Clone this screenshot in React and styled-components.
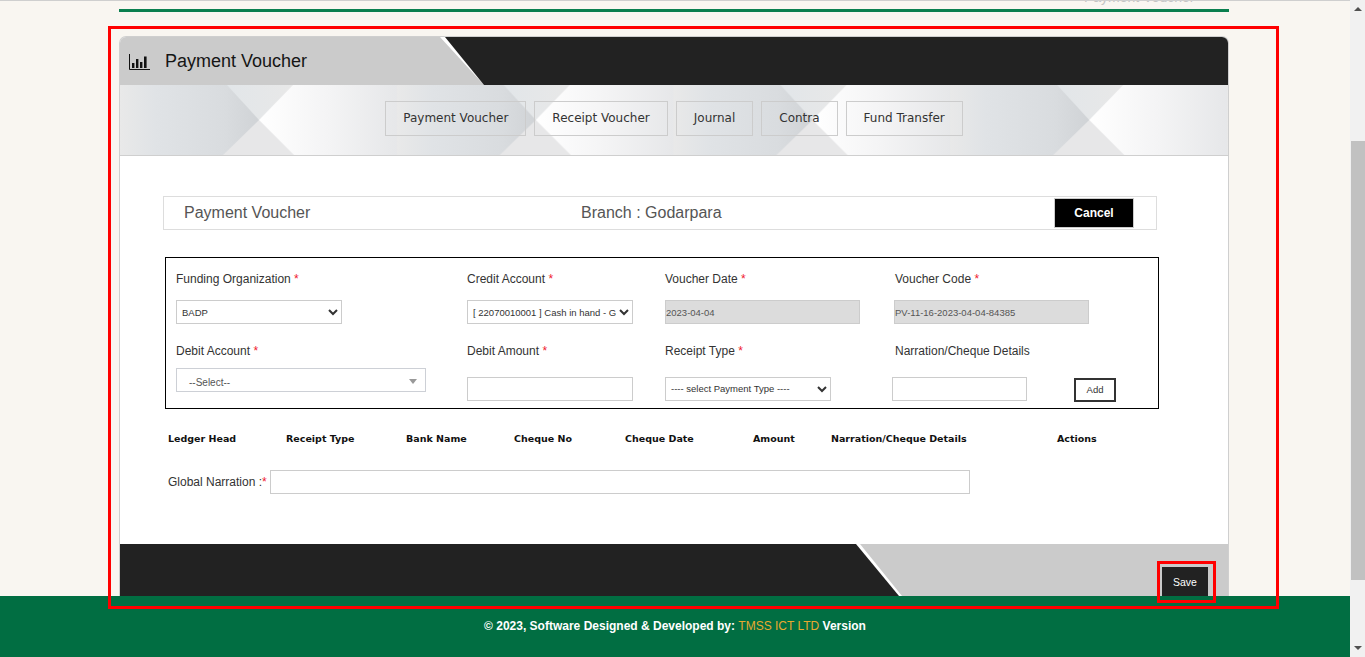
import React from 'react';
import styled, { createGlobalStyle } from 'styled-components';

const GlobalStyle = createGlobalStyle`
  html, body {
    margin: 0;
    padding: 0;
    height: 100%;
    overflow: hidden;
    background: #f9f6f1;
    font-family: "Liberation Sans", Arial, sans-serif;
  }
  * { box-sizing: border-box; }
`;

const tabs = ['Payment Voucher', 'Receipt Voucher', 'Journal', 'Contra', 'Fund Transfer'];

const ledgerColumns = [
  { label: 'Ledger Head', width: 118 },
  { label: 'Receipt Type', width: 120 },
  { label: 'Bank Name', width: 108 },
  { label: 'Cheque No', width: 111 },
  { label: 'Cheque Date', width: 128 },
  { label: 'Amount', width: 78 },
  { label: 'Narration/Cheque Details', width: 226 },
  { label: 'Actions', width: 60 },
];

const ChartIcon = () => (
  <svg width="21" height="16" viewBox="0 0 21 16" fill="none">
    <path d="M.5 0v15.5H21" stroke="#111" strokeWidth="1" />
    <path d="M3 9h2.4v5H3zM7 5h2.4v9H7zM11 8h2.4v6H11zM15 2.5h2.6V14H15z" fill="#111" />
  </svg>
);

const StripPattern = () => (
  <StripArt width="1108" height="70">
    <defs>
      <linearGradient id="leftTile">
        <stop offset="0" stopColor="#e9e9e9" />
        <stop offset="0.25" stopColor="#e0e3e6" />
        <stop offset="0.75" stopColor="#d9dcdf" />
        <stop offset="1" stopColor="#d0d3d6" />
      </linearGradient>
      <linearGradient id="rightTile">
        <stop offset="0" stopColor="#ffffff" />
        <stop offset="0.5" stopColor="#f4f4f5" />
        <stop offset="1" stopColor="#e6e7e9" />
      </linearGradient>
      <linearGradient id="topWedge">
        <stop offset="0" stopColor="#e2e6e9" />
        <stop offset="1" stopColor="#e8e8e8" />
      </linearGradient>
      <pattern id="stripTile" width="276.75" height="70" patternUnits="userSpaceOnUse">
        <rect width="139" height="70" fill="url(#leftTile)" />
        <rect x="139" width="138" height="70" fill="url(#rightTile)" />
        <polygon points="107,0 173,0 139,35" fill="url(#topWedge)" />
        <polygon points="103,70 174,70 139,35" fill="#e7e7e8" />
      </pattern>
    </defs>
    <rect width="1108" height="70" fill="url(#stripTile)" />
  </StripArt>
);

const App = () => (
  <>
    <GlobalStyle />
    <Page>
      <Main>
        <Scroller>
          <CutOffCrumb>
            <span>Payment Voucher</span>
          </CutOffCrumb>
          <GreenRule />
          <Card>
            <CardHeader>
              <ChartIcon />
              <CardTitle>Payment Voucher</CardTitle>
            </CardHeader>
            <TabStrip>
              <StripPattern />
              {tabs.map((tab) => (
                <Tab key={tab}>{tab}</Tab>
              ))}
            </TabStrip>
            <CardBody>
              <SubHeader>
                <SubTitle $width={397}>Payment Voucher</SubTitle>
                <SubTitle $width={473}>Branch : Godarpara</SubTitle>
                <CancelButton>Cancel</CancelButton>
              </SubHeader>

              <FormBox>
                <Field>
                  <Label>Funding Organization <Star>*</Star></Label>
                  <Select $width={166}>
                    <option>BADP</option>
                  </Select>
                </Field>
                <Field>
                  <Label>Credit Account <Star>*</Star></Label>
                  <Select $width={166}>
                    <option>[ 22070010001 ] Cash in hand - Godarpara</option>
                  </Select>
                </Field>
                <Field>
                  <Label>Voucher Date <Star>*</Star></Label>
                  <Input $width={195} $disabled readOnly value="2023-04-04" />
                </Field>
                <Field>
                  <Label>Voucher Code <Star>*</Star></Label>
                  <Input $width={195} $disabled $shift={-1} readOnly value="PV-11-16-2023-04-04-84385" />
                </Field>

                <Field>
                  <Label>Debit Account <Star>*</Star></Label>
                  <SearchSelect>
                    --Select--
                    <Caret />
                  </SearchSelect>
                </Field>
                <Field>
                  <Label $gap={18}>Debit Amount <Star>*</Star></Label>
                  <Input $width={166} readOnly />
                </Field>
                <Field>
                  <Label $gap={18}>Receipt Type <Star>*</Star></Label>
                  <Select $width={166}>
                    <option>---- select Payment Type ----</option>
                  </Select>
                </Field>
                <Field>
                  <Label $gap={18}>Narration/Cheque Details</Label>
                  <ControlRow>
                    <Input $width={135} $shift={-3} readOnly />
                    <AddButton>Add</AddButton>
                  </ControlRow>
                </Field>
              </FormBox>

              <LedgerHead>
                {ledgerColumns.map((col) => (
                  <HeadCell key={col.label} $width={col.width}>{col.label}</HeadCell>
                ))}
              </LedgerHead>

              <NarrationRow>
                <NarrationLabel>Global Narration :<Star>*</Star></NarrationLabel>
                <Input $width={700} readOnly />
              </NarrationRow>
            </CardBody>
            <CardFooter>
              <SaveButton>Save</SaveButton>
            </CardFooter>
          </Card>
        </Scroller>
        <Footer>
          © 2023, Software Designed &amp; Developed by: <FooterBrand>TMSS ICT LTD</FooterBrand> Version
        </Footer>
      </Main>
      <FakeScrollbar>
        <ArrowUp />
        <Thumb />
        <ArrowDown />
      </FakeScrollbar>
      <MarkOuter />
      <MarkSave />
    </Page>
  </>
);

const Page = styled.div`
  position: relative;
  display: flex;
  width: 1365px;
  height: 657px;
  overflow: hidden;
`;

const Main = styled.div`
  display: flex;
  flex-direction: column;
  width: 1350px;
  height: 100%;
`;

const Scroller = styled.div`
  flex: 1;
  min-height: 0;
  overflow: hidden;
  padding-left: 119px;
`;

const CutOffCrumb = styled.div`
  height: 9px;
  margin-left: -119px;
  padding-left: 1084px;
  border-top: 1px solid #cfcfcf;
  overflow: hidden;
  span {
    display: block;
    margin-top: -12px;
    font-size: 14px;
    line-height: 16px;
    color: #c4c4c4;
  }
`;

const GreenRule = styled.div`
  width: 1110px;
  height: 3px;
  background: #0a7f4f;
`;

const Card = styled.div`
  width: 1110px;
  margin-top: 24px;
  border: 1px solid #cfcfcf;
  border-bottom: 0;
  border-radius: 7px 7px 0 0;
  overflow: hidden;
  background: #fff;
`;

const CardHeader = styled.div`
  position: relative;
  display: flex;
  align-items: center;
  gap: 15px;
  height: 48px;
  padding-left: 9px;
  background: #cbcbcb;
  &::before {
    content: '';
    position: absolute;
    inset: 0;
    background: #fff;
    clip-path: polygon(320px 0, 364px 48px, 1110px 48px, 1110px 0);
  }
  &::after {
    content: '';
    position: absolute;
    inset: 0;
    background: #222;
    clip-path: polygon(325px 0, 364px 48px, 1110px 48px, 1110px 0);
  }
  svg {
    margin-top: 2px;
  }
`;

const CardTitle = styled.h1`
  margin: 0;
  font-size: 18px;
  font-weight: 400;
  color: #151515;
`;

const TabStrip = styled.div`
  position: relative;
  display: flex;
  justify-content: center;
  gap: 8px;
  height: 71px;
  padding: 16px 0 0 0;
  margin-left: 0;
  border-bottom: 1px solid #cfcfcf;
  overflow: hidden;
`;

const StripArt = styled.svg`
  position: absolute;
  top: 0;
  left: 0;
`;

const Tab = styled.div`
  position: relative;
  height: 35px;
  padding: 0 17px 0 17px;
  border: 1px solid #cccccc;
  font-family: "DejaVu Sans", Verdana, sans-serif;
  font-size: 12px;
  line-height: 33px;
  color: #333;
`;

const CardBody = styled.div`
  height: 388px;
  padding: 40px 0 0 0;
`;

const SubHeader = styled.div`
  display: flex;
  align-items: center;
  width: 994px;
  height: 34px;
  margin-left: 43px;
  padding-left: 20px;
  border: 1px solid #dddddd;
`;

const SubTitle = styled.div`
  width: ${(p) => p.$width}px;
  font-size: 16px;
  color: #555;
`;

const CancelButton = styled.button`
  width: 80px;
  height: 30px;
  padding: 0;
  border: 1px solid #cccccc;
  background: #000;
  color: #fff;
  font-family: inherit;
  font-size: 12px;
  font-weight: 700;
`;

const FormBox = styled.div`
  display: grid;
  grid-template-columns: 291px 198px 230px 1fr;
  row-gap: 12px;
  width: 994px;
  height: 152px;
  margin: 27px 0 0 45px;
  padding: 13px 10px 0;
  border: 1px solid #000;
`;

const Field = styled.div`
  display: flex;
  flex-direction: column;
  align-items: flex-start;
`;

const Label = styled.label`
  height: 16px;
  margin-bottom: ${(p) => p.$gap ?? 13}px;
  font-size: 12px;
  line-height: 16px;
  color: #333;
`;

const Star = styled.span`
  color: #f01a2e;
`;

const Select = styled.select`
  width: ${(p) => p.$width}px;
  height: 24px;
  padding: 0 0 0 1px;
  border: 1px solid #cccccc;
  border-radius: 0;
  background: #fff;
  font-family: inherit;
  font-size: 9.5px;
  color: #333;
`;

const Input = styled.input`
  width: ${(p) => p.$width}px;
  height: 24px;
  margin-left: ${(p) => p.$shift ?? 0}px;
  padding: 0;
  border: 1px solid #cccccc;
  outline: none;
  background: ${(p) => (p.$disabled ? '#dcdcdc' : '#fff')};
  font-family: inherit;
  font-size: 9.5px;
  color: #555;
`;

const SearchSelect = styled.div`
  position: relative;
  width: 250px;
  height: 24px;
  margin-top: -4px;
  padding-left: 12px;
  border: 1px solid #cdd0d6;
  font-size: 10px;
  line-height: 27px;
  color: #555;
`;

const Caret = styled.span`
  position: absolute;
  top: 10px;
  right: 8px;
  border-style: solid;
  border-width: 5px 4px 0;
  border-color: #999 transparent transparent;
`;

const ControlRow = styled.div`
  display: flex;
  align-items: flex-start;
  gap: 47px;
`;

const AddButton = styled.button`
  width: 42px;
  height: 24px;
  margin-top: 1px;
  padding: 0;
  border: 2px solid #333;
  background: #fff;
  font-family: inherit;
  font-size: 9.5px;
  color: #333;
`;

const LedgerHead = styled.div`
  display: flex;
  height: 14px;
  margin: 23px 0 0 48px;
`;

const HeadCell = styled.div`
  flex: none;
  width: ${(p) => p.$width}px;
  font-family: "DejaVu Sans", Verdana, sans-serif;
  font-size: 9.5px;
  font-weight: 700;
  line-height: 14px;
  color: #111;
  white-space: nowrap;
`;

const NarrationRow = styled.div`
  display: flex;
  align-items: center;
  margin: 24px 0 0 48px;
`;

const NarrationLabel = styled.div`
  width: 102px;
  font-size: 12px;
  color: #333;
`;

const CardFooter = styled.div`
  position: relative;
  display: flex;
  justify-content: flex-end;
  height: 70px;
  padding: 23px 20px 0 0;
  background: #cbcbcb;
  &::before {
    content: '';
    position: absolute;
    inset: 0;
    background: #fff;
    clip-path: polygon(0 0, 740px 0, 782px 52px, 782px 70px, 0 70px);
  }
  &::after {
    content: '';
    position: absolute;
    inset: 0;
    background: #222;
    clip-path: polygon(0 0, 736px 0, 779px 52px, 779px 70px, 0 70px);
  }
`;

const SaveButton = styled.button`
  position: relative;
  z-index: 1;
  width: 46px;
  height: 30px;
  padding: 0;
  border: 0;
  background: #222;
  color: #fff;
  font-family: inherit;
  font-size: 10.5px;
`;

const Footer = styled.footer`
  flex: none;
  height: 61px;
  padding-top: 23px;
  background: #016e42;
  color: #fff;
  font-size: 12px;
  font-weight: 700;
  line-height: 15px;
  text-align: center;
`;

const FooterBrand = styled.span`
  color: #e8a92f;
  font-weight: 400;
`;

const FakeScrollbar = styled.div`
  position: relative;
  flex: none;
  width: 15px;
  height: 100%;
  background: #f1f1f1;
`;

const Thumb = styled.div`
  position: absolute;
  top: 141px;
  left: 1px;
  width: 14px;
  height: 439px;
  background: #c1c1c1;
`;

const ArrowUp = styled.span`
  position: absolute;
  top: 7px;
  left: 4px;
  border-style: solid;
  border-width: 0 4px 4px;
  border-color: transparent transparent #505050;
`;

const ArrowDown = styled.span`
  position: absolute;
  bottom: 7px;
  left: 4px;
  border-style: solid;
  border-width: 4px 4px 0;
  border-color: #505050 transparent transparent;
`;

const MarkOuter = styled.div`
  position: absolute;
  top: 26px;
  left: 108px;
  width: 1171px;
  height: 583px;
  border: 3px solid #ff0000;
  pointer-events: none;
`;

const MarkSave = styled.div`
  position: absolute;
  top: 561px;
  left: 1157px;
  width: 59px;
  height: 42px;
  border: 3px solid #ff0000;
  pointer-events: none;
`;

export default App;
